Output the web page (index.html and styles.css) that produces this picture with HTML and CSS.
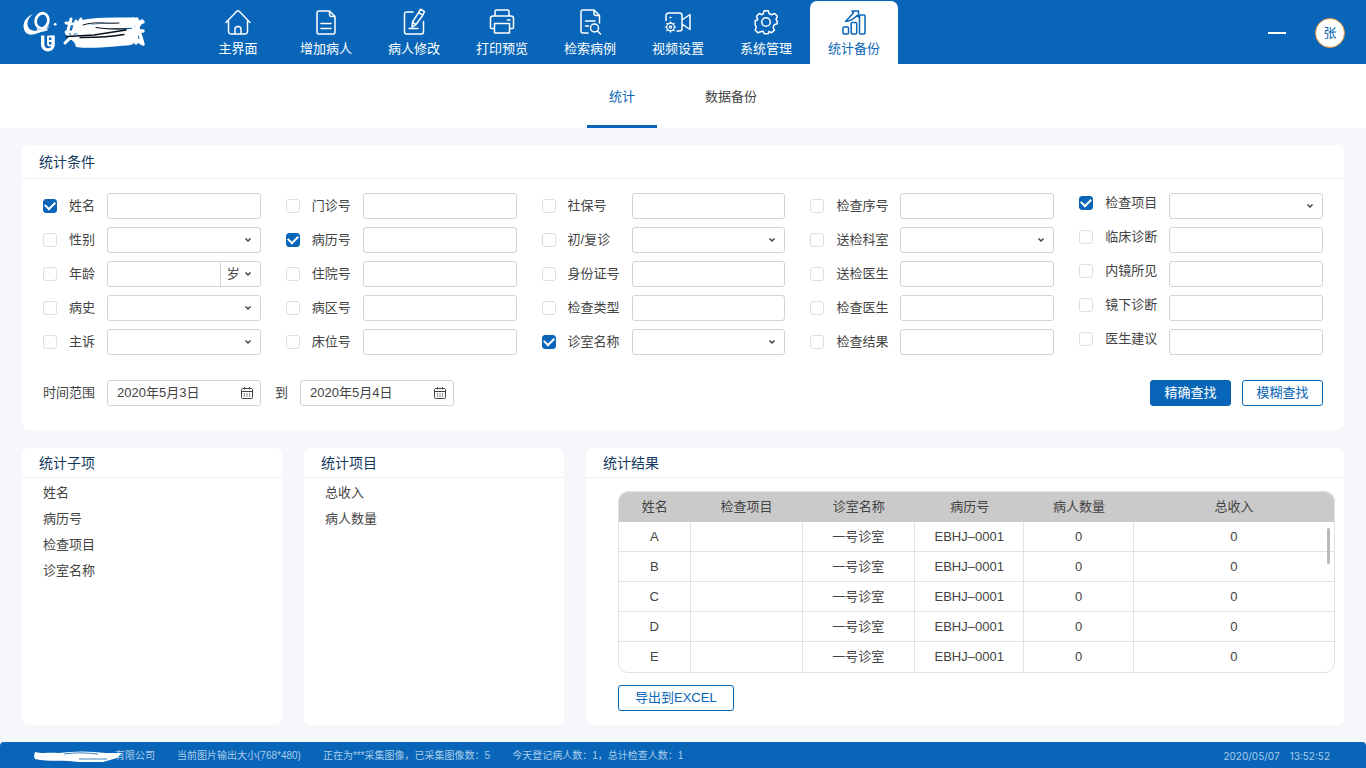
FILE: index.html
```html
<!DOCTYPE html>
<html lang="zh-CN">
<head>
<meta charset="utf-8">
<meta name="viewport" content="width=device-width, initial-scale=1">
<title>统计备份</title>
<link rel="stylesheet" href="styles.css">
</head>
<body>
<svg class="sprite" aria-hidden="true">
  <symbol id="chevron" viewBox="0 0 8 6"><path d="M1.500 1.500 4 4 6.500 1.500" fill="none" stroke="currentColor" stroke-width="1.500"/></symbol>
  <symbol id="calendar" viewBox="0 0 14 14"><path d="M2.500 2.500h9a1 1 0 0 1 1 1v8a1 1 0 0 1-1 1h-9a1 1 0 0 1-1-1v-8a1 1 0 0 1 1-1zM1.500 5.500h11M4.500 1v2.500M9.500 1v2.500" fill="none" stroke="currentColor"/><path d="M3.800 8h7M3.800 10h7" fill="none" stroke="currentColor" stroke-dasharray="1.200 1.400"/></symbol>
</svg>

<header class="topbar">
  <div class="brand">
    <svg width="128" height="44" viewBox="20 9 128 44" role="img" aria-label="标志">
      <ellipse cx="42" cy="20.800" rx="6.300" ry="7.600" transform="rotate(14 42 20.800)" fill="none" stroke="#fff" stroke-width="2.800"/>
      <path d="M33.500 13.800C26 16.500 22.500 23 23.800 28.500 25 34 29.500 35.500 34.500 34.200 41 32.500 46 29.500 50.800 26c-5 2-10.500 4.800-15.500 4.800C30.500 30.800 27.800 28 27.500 24.500 27.200 20.500 29.500 16.500 33.500 13.800z" fill="#fff"/>
      <path d="M37 29c2 2 6 2.500 10.500.5" fill="none" stroke="#fff" stroke-width="1.500"/>
      <circle cx="55.200" cy="24.300" r="1.400" fill="#fff"/>
      <path d="M42.700 35.500v9.200a5.200 5.200 0 0 0 10.400 0v-9.200" fill="none" stroke="#fff" stroke-width="3.400"/>
      <path d="M47.500 36.500h5.500M48 41h4M48 45.300h4M48 36v9.500" fill="none" stroke="#fff" stroke-width="1.800"/>
      <g fill="none" stroke="#fff" stroke-linejoin="round" stroke-linecap="round">
        <path d="M66 23l9 1M71 19l-4 15 9 8M76 21l-4 15-7 7M81 19l-6 10M66 32h12" stroke-width="3"/>
        <path d="M78 24C93 19 116 21 134 20l-2 5-54 3 2 4h54l-5 5H76l1 5h54l3-4M78 44.500c17 2 34-1 51-2" stroke-width="5.500"/>
        <path d="M128 22h15M137 19l-1 24M129 31h14M138 28l5 16M134 28l-8 14M142 21l-5 7M131 34l10 9" stroke-width="3.500"/>
      </g>
      <g fill="none" stroke="#07101b" stroke-linecap="round">
        <path d="M83 25c12-4 22-1 36-2" stroke-width="1"/>
        <path d="M96 27.500c10 2 20 1 30 1.500" stroke-width="1.200"/>
        <path d="M66 36.500l28-1.500 32-5" stroke-width="1.300"/>
        <path d="M80 37.500c14 0 29 0 44-3" stroke-width="1.300"/>
      </g>
    </svg>
  </div>
  <nav class="nav" aria-label="主导航">
    <a class="nav__item" href="#">
      <svg class="nav__icon" viewBox="0 0 28 28"><path d="M2 14.500 12.800 3.300a1.700 1.700 0 0 1 2.400 0L26 14.500M4.500 13.500v10a2.500 2.500 0 0 0 2.500 2.500h14a2.500 2.500 0 0 0 2.500-2.500v-10M11 26v-4.500a3 3 0 0 1 6 0V26"/></svg>
      主界面</a>
    <a class="nav__item" href="#">
      <svg class="nav__icon" viewBox="0 0 28 28"><path d="M17.500 3H7a2 2 0 0 0-2 2v19a2 2 0 0 0 2 2h14a2 2 0 0 0 2-2V8.500zM17.500 3v3.500a2 2 0 0 0 2 2H23M9 15.500h10M9 20.500h10"/></svg>
      增加病人</a>
    <a class="nav__item" href="#">
      <svg class="nav__icon" viewBox="0 0 28 28"><path d="M13 4H6.500a2 2 0 0 0-2 2v18a2 2 0 0 0 2 2h15a2 2 0 0 0 2-2V13.500M9 20.500h9M20.500 1.200l4 2.500-1.700 3.500-4.200-2.500zM18.600 4.700 12.500 14l-.5 5 4-2.500 6.800-9.300M12.500 14l3.500 2.500"/></svg>
      病人修改</a>
    <a class="nav__item" href="#">
      <svg class="nav__icon" viewBox="0 0 28 28"><path d="M7 8V3.500A1.500 1.500 0 0 1 8.500 2h11A1.500 1.500 0 0 1 21 3.500V8M6.500 20.500H3.500a1 1 0 0 1-1-1v-9A2.500 2.500 0 0 1 5 8h18a2.500 2.500 0 0 1 2.500 2.500v9a1 1 0 0 1-1 1h-3M6.500 15.500h15v9.500h-15zM19.500 12h2.500"/></svg>
      打印预览</a>
    <a class="nav__item" href="#">
      <svg class="nav__icon" viewBox="0 0 28 28"><path d="M12 25H7a2 2 0 0 1-2-2V4a2 2 0 0 1 2-2h11l5.500 5.500V15M18 2v3.500a2 2 0 0 0 2 2h3.500M9.500 13H19M9.500 18h3M21.500 23l3 3"/><circle cx="18.500" cy="20" r="4"/></svg>
      检索病例</a>
    <a class="nav__item" href="#">
      <svg class="nav__icon" viewBox="0 0 28 28"><path d="M2 12.500V7.500A2.500 2.500 0 0 1 4.500 5h11A2.500 2.500 0 0 1 18 7.500v13a2.500 2.500 0 0 1-2.500 2.500H13M18 12l8-5.500v15L18 16M6 9.500h1"/><g stroke-width="1.200"><circle cx="6.500" cy="19" r="3.900"/><circle cx="6.500" cy="19" r="1.200"/><path d="M6.500 13.800v1.300M6.500 22.900v1.300M1.300 19h1.300M10.400 19h1.300M2.800 15.300l1 1M9.200 21.700l1 1M2.800 22.700l1-1M9.200 16.300l1-1"/></g></svg>
      视频设置</a>
    <a class="nav__item" href="#">
      <svg class="nav__icon" viewBox="0 0 28 28"><path d="M12 3h4l1 3 2.600 1.100 2.800-1.300 2.800 2.800-1.300 2.800L25 14l0 0 0 2-3 1-1.100 2.600 1.300 2.800-2.800 2.600-2.700-1.200L16 26h-4l-1-2.500-2.500.5-2.900 1-2.700-2.700 1.200-2.700L3 17l-0 0V13l2.500-1L4.300 8.600l2.700-2.800 2.800 1.300L11 6z" transform="translate(.2 -.3)"/><circle cx="14" cy="14" r="4.300"/></svg>
      系统管理</a>
    <a class="nav__item nav__item--active" href="#" aria-current="page">
      <svg class="nav__icon" viewBox="0 0 28 28"><rect x="3" y="19" width="5.500" height="7" rx="1"/><rect x="11.200" y="14.500" width="5.500" height="11.500" rx="1"/><rect x="19.500" y="7" width="5.500" height="19" rx="1"/><path d="M5.500 13.500c4.500-.5 9-3 11.500-6l1.500 1.500L18.500 3 12 3l1.500 1.700C11 8 8 10.500 5.500 13.500z"/></svg>
      统计备份</a>
  </nav>
  <div class="account">
    <button class="minimize" type="button" aria-label="最小化"></button>
    <button class="avatar" type="button">张</button>
  </div>
</header>

<nav class="tabs" aria-label="统计备份">
  <a class="tabs__item tabs__item--active" href="#" aria-current="page">统计</a>
  <a class="tabs__item" href="#">数据备份</a>
</nav>

<main class="content">
  <section class="card filters">
    <h2 class="card__title card__title--tall">统计条件</h2>
    <form class="filters__body">
      <div class="fields">
        <div class="fields__col fields__col--2">
          <div class="field"><label class="check"><input type="checkbox" checked><span>姓名</span></label><input class="box" type="text" aria-label="姓名"></div>
          <div class="field"><label class="check"><input type="checkbox"><span>性别</span></label><div class="pick"><select class="box" aria-label="性别"><option></option></select><svg class="pick__arrow"><use href="#chevron"/></svg></div></div>
          <div class="field"><label class="check"><input type="checkbox"><span>年龄</span></label><div class="box combo"><input class="combo__value" type="text" aria-label="年龄"><div class="pick combo__unit"><select aria-label="年龄单位"><option>岁</option></select><svg class="pick__arrow"><use href="#chevron"/></svg></div></div></div>
          <div class="field"><label class="check"><input type="checkbox"><span>病史</span></label><div class="pick"><select class="box" aria-label="病史"><option></option></select><svg class="pick__arrow"><use href="#chevron"/></svg></div></div>
          <div class="field"><label class="check"><input type="checkbox"><span>主诉</span></label><div class="pick"><select class="box" aria-label="主诉"><option></option></select><svg class="pick__arrow"><use href="#chevron"/></svg></div></div>
        </div>
        <div class="fields__col fields__col--3">
          <div class="field"><label class="check"><input type="checkbox"><span>门诊号</span></label><input class="box" type="text" aria-label="门诊号"></div>
          <div class="field"><label class="check"><input type="checkbox" checked><span>病历号</span></label><input class="box" type="text" aria-label="病历号"></div>
          <div class="field"><label class="check"><input type="checkbox"><span>住院号</span></label><input class="box" type="text" aria-label="住院号"></div>
          <div class="field"><label class="check"><input type="checkbox"><span>病区号</span></label><input class="box" type="text" aria-label="病区号"></div>
          <div class="field"><label class="check"><input type="checkbox"><span>床位号</span></label><input class="box" type="text" aria-label="床位号"></div>
        </div>
        <div class="fields__col">
          <div class="field"><label class="check"><input type="checkbox"><span>社保号</span></label><input class="box" type="text" aria-label="社保号"></div>
          <div class="field"><label class="check"><input type="checkbox"><span>初/复诊</span></label><div class="pick"><select class="box" aria-label="初/复诊"><option></option></select><svg class="pick__arrow"><use href="#chevron"/></svg></div></div>
          <div class="field"><label class="check"><input type="checkbox"><span>身份证号</span></label><input class="box" type="text" aria-label="身份证号"></div>
          <div class="field"><label class="check"><input type="checkbox"><span>检查类型</span></label><input class="box" type="text" aria-label="检查类型"></div>
          <div class="field"><label class="check"><input type="checkbox" checked><span>诊室名称</span></label><div class="pick"><select class="box" aria-label="诊室名称"><option></option></select><svg class="pick__arrow"><use href="#chevron"/></svg></div></div>
        </div>
        <div class="fields__col">
          <div class="field"><label class="check"><input type="checkbox"><span>检查序号</span></label><input class="box" type="text" aria-label="检查序号"></div>
          <div class="field"><label class="check"><input type="checkbox"><span>送检科室</span></label><div class="pick"><select class="box" aria-label="送检科室"><option></option></select><svg class="pick__arrow"><use href="#chevron"/></svg></div></div>
          <div class="field"><label class="check"><input type="checkbox"><span>送检医生</span></label><input class="box" type="text" aria-label="送检医生"></div>
          <div class="field"><label class="check"><input type="checkbox"><span>检查医生</span></label><input class="box" type="text" aria-label="检查医生"></div>
          <div class="field"><label class="check"><input type="checkbox"><span>检查结果</span></label><input class="box" type="text" aria-label="检查结果"></div>
        </div>
        <div class="fields__col fields__col--raised">
          <div class="field"><label class="check"><input type="checkbox" checked><span>检查项目</span></label><div class="pick"><select class="box" aria-label="检查项目"><option></option></select><svg class="pick__arrow"><use href="#chevron"/></svg></div></div>
          <div class="field"><label class="check"><input type="checkbox"><span>临床诊断</span></label><input class="box" type="text" aria-label="临床诊断"></div>
          <div class="field"><label class="check"><input type="checkbox"><span>内镜所见</span></label><input class="box" type="text" aria-label="内镜所见"></div>
          <div class="field"><label class="check"><input type="checkbox"><span>镜下诊断</span></label><input class="box" type="text" aria-label="镜下诊断"></div>
          <div class="field"><label class="check"><input type="checkbox"><span>医生建议</span></label><input class="box" type="text" aria-label="医生建议"></div>
        </div>
      </div>
      <div class="range">
        <label for="date-from">时间范围</label>
        <div class="box date"><input id="date-from" type="text" value="2020年5月3日"><button type="button" aria-label="选择开始日期"><svg width="14" height="14"><use href="#calendar"/></svg></button></div>
        <label for="date-to">到</label>
        <div class="box date"><input id="date-to" type="text" value="2020年5月4日"><button type="button" aria-label="选择结束日期"><svg width="14" height="14"><use href="#calendar"/></svg></button></div>
        <div class="range__actions">
          <button class="btn btn--primary" type="button">精确查找</button>
          <button class="btn" type="button">模糊查找</button>
        </div>
      </div>
    </form>
  </section>

  <div class="panels">
    <section class="card">
      <h2 class="card__title">统计子项</h2>
      <ul class="list"><li>姓名</li><li>病历号</li><li>检查项目</li><li>诊室名称</li></ul>
    </section>
    <section class="card">
      <h2 class="card__title">统计项目</h2>
      <ul class="list"><li>总收入</li><li>病人数量</li></ul>
    </section>
    <section class="card">
      <h2 class="card__title">统计结果</h2>
      <div class="results">
        <div class="results__frame">
          <table>
            <colgroup><col class="w-name"><col class="w-item"><col class="w-item"><col class="w-code"><col class="w-code"><col></colgroup>
            <thead><tr><th>姓名</th><th>检查项目</th><th>诊室名称</th><th>病历号</th><th>病人数量</th><th>总收入</th></tr></thead>
            <tbody>
              <tr><td>A</td><td></td><td>一号诊室</td><td>EBHJ–0001</td><td>0</td><td>0</td></tr>
              <tr><td>B</td><td></td><td>一号诊室</td><td>EBHJ–0001</td><td>0</td><td>0</td></tr>
              <tr><td>C</td><td></td><td>一号诊室</td><td>EBHJ–0001</td><td>0</td><td>0</td></tr>
              <tr><td>D</td><td></td><td>一号诊室</td><td>EBHJ–0001</td><td>0</td><td>0</td></tr>
              <tr><td>E</td><td></td><td>一号诊室</td><td>EBHJ–0001</td><td>0</td><td>0</td></tr>
            </tbody>
          </table>
          <span class="results__thumb"></span>
        </div>
        <button class="btn btn--wide" type="button">导出到EXCEL</button>
      </div>
    </section>
  </div>
</main>

<footer class="status">
  <span class="status__company">
    <svg width="90" height="14" viewBox="0 0 90 14" aria-hidden="true"><path d="M2 3c8 2 15 0 23 1 16-2 32-2 48 0l16 0-5 5-14 4H46c-14-2-30 0-44-3L1 7z" fill="#fff"/><path d="M31 5c10-1.500 21-1.500 34 0M46 10h28" fill="none" stroke="#3f86c5" stroke-width="1"/></svg>有限公司</span>
  <span>当前图片输出大小(768*480)</span>
  <span>正在为***采集图像，已采集图像数：5</span>
  <span>今天登记病人数：1，总计检查人数：1</span>
  <time class="status__clock" datetime="2020-05-07T13:52:52"><span>2020/05/07</span><span>13:52:52</span></time>
</footer>
</body>
</html>
```

FILE: styles.css
```css
* { box-sizing: border-box; }

:root {
  --blue: #0865b7;
  --navy: #14395f;
  --text: #434343;
  --line: #d3d3d6;
  --grid: #dfe0ea;
}

body {
  margin: 0;
  min-height: 100vh;
  display: flex;
  flex-direction: column;
  background: #f6f7fa;
  color: var(--text);
  font: 13px/20px "Liberation Sans", "Noto Sans CJK SC", sans-serif;
}

input, select, button {
  font: inherit;
  color: inherit;
  margin: 0;
  padding: 0;
  border: 0;
  background: none;
  min-width: 0;
}

a { text-decoration: none; }
.sprite { display: none; }

/* top bar */
.topbar {
  display: flex;
  height: 64px;
  background: var(--blue);
  color: #fff;
}

.brand { width: 194px; padding: 9px 0 0 20px; }
.brand svg { display: block; }

.nav { display: flex; padding-top: 1px; }

.nav__item {
  width: 88px;
  display: flex;
  flex-direction: column;
  align-items: center;
  gap: 3px;
  padding-top: 7px;
  color: #fff;
  border-radius: 7px 7px 0 0;
}

.nav__item--active { background: #fff; color: var(--blue); }

.nav__icon {
  width: 28px;
  height: 28px;
  fill: none;
  stroke: currentColor;
  stroke-width: 1.5;
  stroke-linecap: round;
  stroke-linejoin: round;
}

.account {
  margin-left: auto;
  padding: 2px 21px 0 0;
  display: flex;
  align-items: center;
  gap: 29px;
}

.minimize { width: 18px; height: 2px; background: #fff; }

.avatar {
  width: 30px;
  height: 30px;
  border: 1px solid #e8923a;
  border-radius: 50%;
  background: #fff;
  color: var(--blue);
}

/* sub tabs */
.tabs {
  display: flex;
  justify-content: center;
  gap: 26px;
  height: 64px;
  background: #fff;
}

.tabs__item {
  padding: 23px 22px 0;
  border-bottom: 3px solid transparent;
  color: var(--text);
}

.tabs__item--active { color: var(--blue); border-color: var(--blue); }

/* cards */
.content {
  flex: 1;
  display: flex;
  flex-direction: column;
  gap: 18px;
  padding: 17px 22px;
}

.card { background: #fff; border-radius: 7px; }

.card__title {
  margin: 0;
  padding: 5px 17px 4px;
  border-bottom: 1px solid #eeeef2;
  color: var(--navy);
  font-size: 14px;
  font-weight: 400;
}

.card__title--tall { padding: 7px 17px 6px; }

/* filters */
.filters__body { padding: 14px 21px 24px; }

.fields {
  display: grid;
  grid-template-columns: minmax(0, 218fr) minmax(0, 231fr) repeat(3, minmax(0, 244fr));
  gap: 25px;
}

.fields__col { display: grid; gap: 8px; }
.field { display: flex; gap: 12px; height: 26px; }
.check { display: flex; align-items: center; gap: 12px; }
.check span { width: 52px; white-space: nowrap; }
.fields__col--2 .check span { width: 26px; }
.fields__col--3 .check span { width: 39px; }
.fields__col--raised .check { padding-bottom: 6px; }

.check input {
  appearance: none;
  display: grid;
  place-items: center;
  flex: none;
  width: 14px;
  height: 14px;
  border: 1px solid #dedee3;
  border-radius: 3px;
}

.check input:checked { background: var(--blue); border-color: var(--blue); }

.check input:checked::after {
  content: "";
  width: 8px;
  height: 5px;
  margin-bottom: 3px;
  border: solid #fff;
  border-width: 0 0 2px 2px;
  transform: rotate(-45deg);
}

.box {
  flex: 1;
  width: 100%;
  min-width: 0;
  height: 26px;
  border: 1px solid var(--line);
  border-radius: 3px;
  background: #fff;
}

.pick { flex: 1; min-width: 0; position: relative; }
select { appearance: none; }

.pick__arrow {
  position: absolute;
  right: 9px;
  top: 10px;
  width: 8px;
  height: 6px;
  pointer-events: none;
}

.combo { display: flex; }
.combo__value { flex: 1; width: 0; }
.combo__unit { flex: 0 0 40px; border-left: 1px solid var(--line); }
.combo__unit select { width: 100%; height: 24px; padding-left: 6px; }
.combo__unit .pick__arrow { right: 8px; top: 9px; }

.range { display: flex; align-items: center; margin-top: 25px; }
.range label { margin-right: 12px; }
.date { flex: 0 0 154px; display: flex; align-items: center; padding: 0 6px 0 9px; margin-right: 14px; }
.date input { flex: 1; width: 0; }
.date button { display: flex; }
.range__actions { display: flex; gap: 11px; margin-left: auto; }

.btn {
  height: 26px;
  padding: 0 13px;
  border: 1px solid var(--blue);
  border-radius: 3px;
  background: #fff;
  color: var(--blue);
}

.range__actions .btn { min-width: 81px; }
.btn--primary { background: var(--blue); color: #fff; }
.btn--wide { padding: 0 16px; }

/* lower panels */
.panels {
  flex: 1;
  display: grid;
  grid-template-columns: 260fr 260fr 758fr;
  gap: 22px;
}

.list { list-style: none; margin: 0; padding: 2px 21px; line-height: 26px; }

.results { padding: 13px 9px 13px 32px; }

.results__frame {
  position: relative;
  margin-bottom: 12px;
  overflow: hidden;
  border: 1px solid var(--grid);
  border-radius: 10px;
}

table { width: 100%; table-layout: fixed; border-spacing: 0; text-align: center; }
.w-name { width: 10%; }
.w-item { width: 15.7%; }
.w-code { width: 15.3%; }
th { height: 30px; padding: 0; background: #cacaca; font-weight: 400; }
td { height: 30px; padding: 0; border-right: 1px solid var(--grid); border-bottom: 1px solid var(--grid); }
td:last-child { border-right: 0; }
tr:last-child td { border-bottom: 0; }

.results__thumb {
  position: absolute;
  top: 36px;
  right: 4px;
  width: 3px;
  height: 36px;
  border-radius: 2px;
  background: #b9b9b9;
}

/* status bar */
.status {
  display: flex;
  align-items: center;
  gap: 22px;
  height: 26px;
  padding: 1px 36px 0 33px;
  border-radius: 4px 4px 0 0;
  background: var(--blue);
  color: #a9cdec;
  font-size: 10px;
}

.status__company { display: flex; align-items: center; }
.status__company svg { margin-right: -8px; position: relative; }
.status__clock { display: flex; gap: 10px; margin-left: auto; font-family: Inter, sans-serif; }
```
